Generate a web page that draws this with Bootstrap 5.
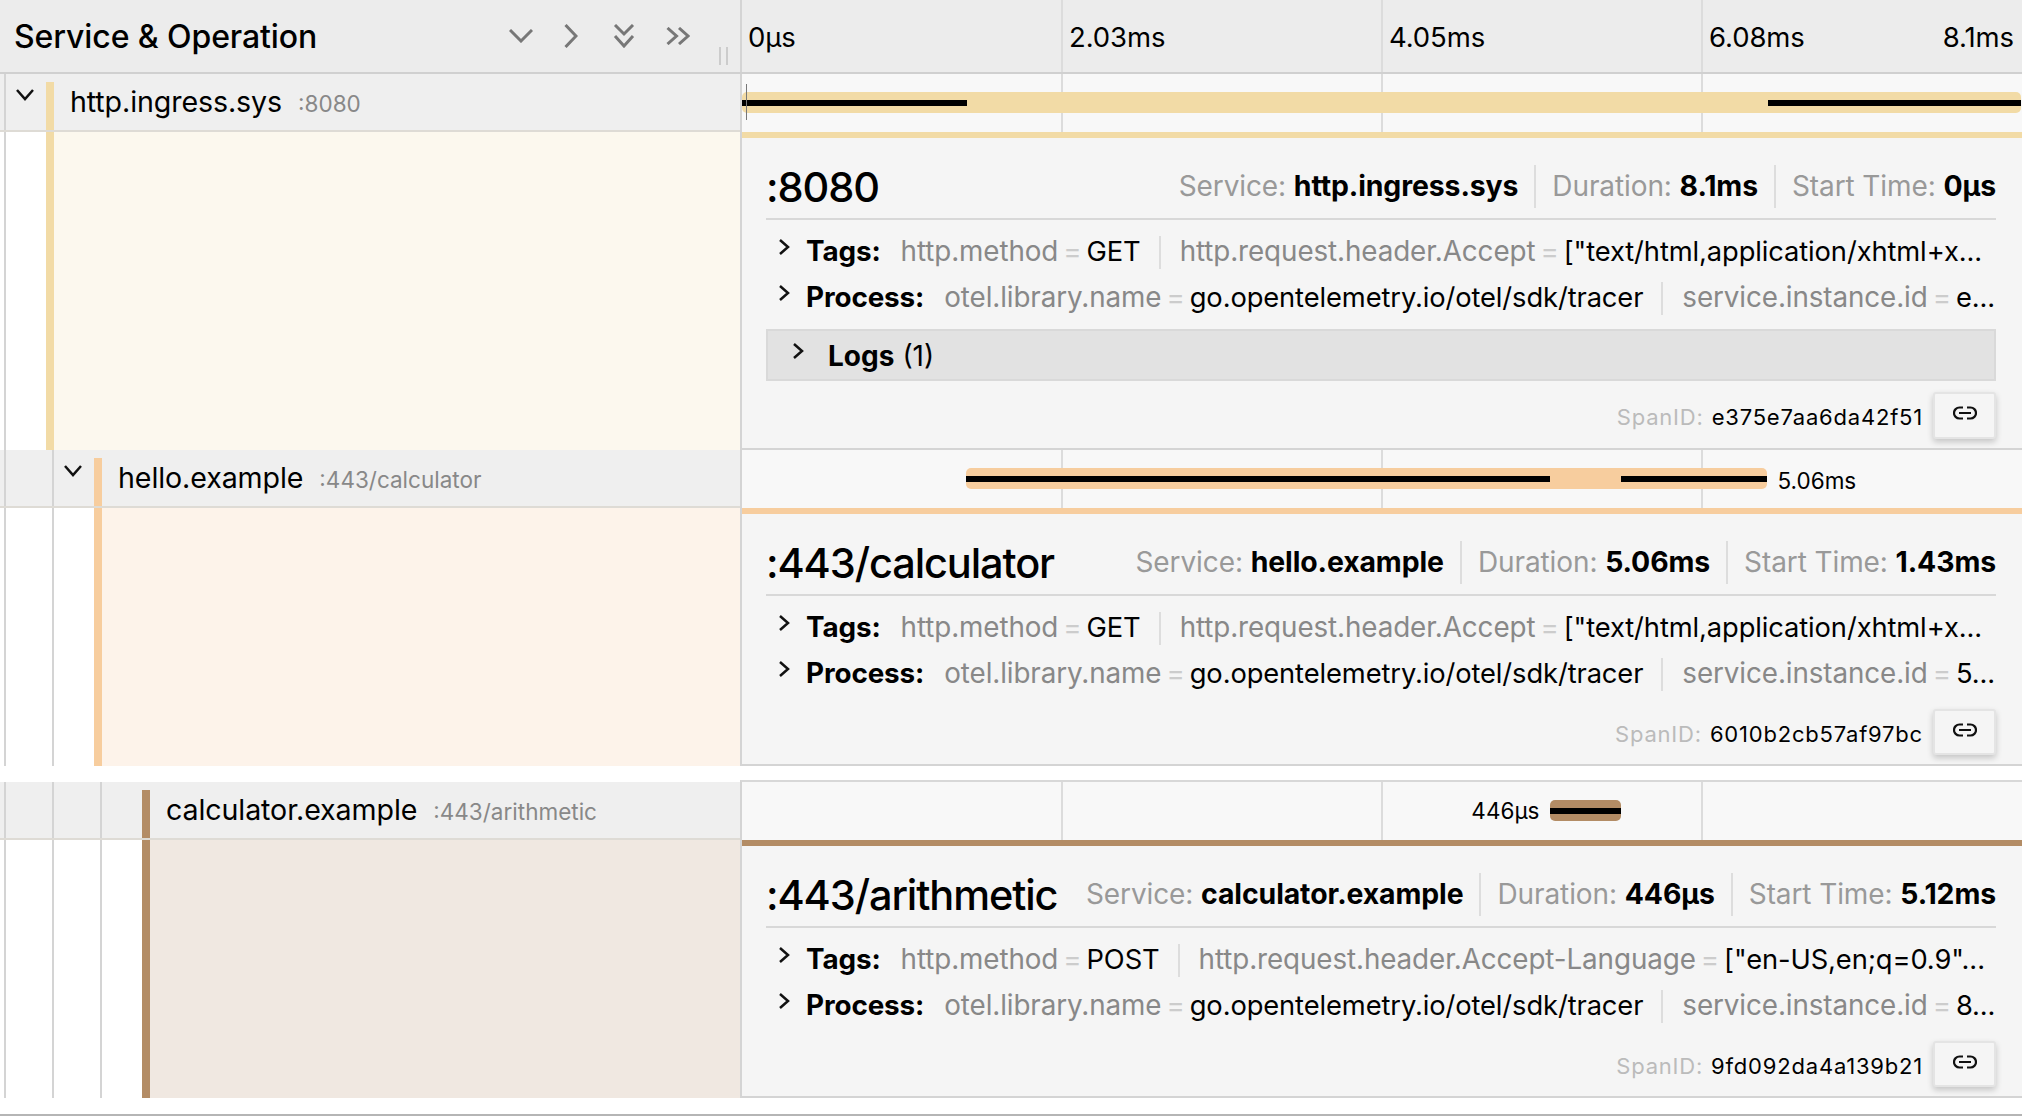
<!DOCTYPE html>
<html lang="en">
  <head>
    <meta charset="UTF-8" />
    <meta name="viewport" content="width=device-width, initial-scale=1.0" />
    <title>Trace timeline</title>
    <link href="https://cdn.jsdelivr.net/npm/bootstrap@5.3.3/dist/css/bootstrap.min.css" rel="stylesheet" />
    <style>
      html, body { background: #fff; overflow: hidden; }
      body { font-family: Inter, "Liberation Sans", sans-serif; color: #000; height: 1116px; }
      .trace-view { height: 1116px; border-bottom: 2px solid #b5b5b5; }
      .name-col { width: 740px; flex: none; }
      .time-col { flex: 1 1 0; min-width: 0; position: relative; border-left: 2px solid #d4d4d4; }

      .trace-head { height: 74px; background: #ececec; border-bottom: 2px solid #d0d0d0; }
      .head-title { font-size: 32px; font-weight: 500; padding: 2px 0 0 14px; letter-spacing: -0.1px; }
      .head-tools { position: relative; padding-right: 50px; gap: 31px; color: #777; }
      .head-tools svg:nth-child(3) { margin-left: 4px; }
      .drag-grip { position: absolute; right: 12px; bottom: 7px; width: 9px; height: 18px; border-left: 2px solid #ccc; border-right: 2px solid #ccc; }
      .tick-label { position: absolute; top: 21px; font-size: 27.5px; line-height: 32px; letter-spacing: -0.1px; }

      .span-row { height: 58px; }
      .span-row.row-topline .time-col { border-top: 2px solid #d8d8d8; }
      .span-row .name-col { background: #efefef; border-bottom: 2px solid #dedbd5; }
      .span-row .time-col { background: #f8f8f8; }
      .indent-guide { width: 48px; flex: none; border-left: 2px solid #d4d4d4; margin-left: 0; }
      .indent-first { margin-left: 4px; }
      .indent-last { width: 42px; }
      .toggle-btn { padding: 14px 0 0 9px; line-height: 0; }
      .color-bar { width: 8px; flex: none; align-self: stretch; }
      .span-row .color-bar { margin-top: 8px; }
      .svc-name { font-size: 28.6px; padding-left: 16px; letter-spacing: -0.1px; }
      .op-name { font-size: 22.5px; color: #888; padding-left: 16px; position: relative; top: 2px; }
      .grid-line { position: absolute; top: 0; bottom: 0; width: 2px; margin-left: -1px; background: #dcdcdc; }
      .span-bar { position: absolute; height: 21px; border-radius: 5px; }
      .run-line { position: absolute; height: 6px; background: #000; top: 8px; }
      .dur-label { position: absolute; font-size: 22.5px; line-height: 26px; }
      .start-mark { position: absolute; left: 4px; top: 10px; width: 1px; height: 36px; background: #777; }

      .detail-fill { flex: 1 1 0; }
      .detail-box { background: #f5f5f5; border-bottom: 2px solid #d4d4d4; padding: 0 26px 9px 24px; border-top-width: 6px; border-top-style: solid; }
      .detail-head { height: 82px; padding-top: 17px; border-bottom: 2px solid #d8d8d8; }
      .op-title { font-size: 41.5px; letter-spacing: -1.1px; margin: 0; font-weight: 500; padding-top: 3px; white-space: nowrap; }
      .meta-list { font-size: 28px; color: #999; white-space: nowrap; letter-spacing: -0.1px; align-items: baseline; }
      .meta-list strong { color: #000; font-weight: 700; font-size: 28.4px; }
      .meta-item + .meta-item { border-left: 2px solid #ddd; margin-left: 16px; padding-left: 16px; }

      .kv-rows { padding-top: 8px; }
      .kv-row { height: 46px; padding-top: 2px; font-size: 27.8px; white-space: nowrap; overflow: hidden; letter-spacing: -0.1px; }
      .kv-row .kv-chevron { width: 40px; flex: none; padding-left: 12px; line-height: 0; position: relative; top: -5px; }
      .kv-title { font-weight: 700; font-size: 27.8px; margin-right: 20px; }
      .kv-key { color: #888; }
      .kv-eq { color: #ccc; margin: 0 5px; }
      .kv-val { color: #000; font-size: 27.3px; }
      .kv-sep { border-left: 2px solid #ddd; height: 33px; margin: 0 19px 0 18px; flex: none; }

      .logs-bar { height: 52px; margin-top: 9px; padding-top: 2px; background: #e2e2e2; border: 2px solid #d9d9d9; font-size: 28px; padding-left: 24px; }
      .logs-bar .kv-chevron { width: 36px; line-height: 0; position: relative; top: -5px; }
      .logs-bar strong { font-weight: 700; margin-right: 8px; }

      .span-foot { height: 46px; margin-top: 13px; }
      .span-foot.after-logs { height: 47px; margin-top: 11px; }
      .span-id { font-size: 22px; letter-spacing: 0.8px; color: #bbb; margin-right: 10px; position: relative; top: 2px; }
      .span-id b { color: #000; font-weight: 400; margin-left: 1px; }
      .link-btn { width: 63px; height: 100%; padding: 0 0 5px; background: #f5f5f5; border: 2px solid #e4e4e4; border-radius: 3px; box-shadow: 0 3px 6px rgba(0,0,0,.2); line-height: 0; }
      .row-gap { height: 14px; }
    </style>
  </head>
  <body>
    <div class="trace-view">
      <div class="trace-head d-flex">
        <div class="name-col d-flex align-items-center justify-content-between position-relative">
          <div class="head-title">Service &amp; Operation</div>
          <div class="head-tools d-flex align-items-center">
            <svg width="24" height="14" viewBox="0 0 24 14" fill="none" stroke="currentColor" stroke-width="3"><path d="M1 1l11 11L23 1"/></svg>
            <svg width="14" height="24" viewBox="0 0 14 24" fill="none" stroke="currentColor" stroke-width="3"><path d="M1.5 1L12 12 1.5 23"/></svg>
            <svg width="22" height="24" viewBox="0 0 22 24" fill="none" stroke="currentColor" stroke-width="3"><path d="M2 1l9 9 9-9M2 12l9 10 9-10"/></svg>
            <svg width="24" height="18" viewBox="0 0 24 18" fill="none" stroke="currentColor" stroke-width="3"><path d="M1.5 1l9 8-9 8M13 1l9 8-9 8"/></svg>
          </div>
          <div class="drag-grip"></div>
        </div>
        <div class="time-col">
          <div class="grid-line" style="left: 25%"></div>
          <div class="grid-line" style="left: 50%"></div>
          <div class="grid-line" style="left: 75%"></div>
          <span class="tick-label" style="left: 6px">0µs</span>
          <span class="tick-label" style="left: calc(25% + 7px)">2.03ms</span>
          <span class="tick-label" style="left: calc(50% + 7px)">4.05ms</span>
          <span class="tick-label" style="left: calc(75% + 7px)">6.08ms</span>
          <span class="tick-label" style="right: 8px">8.1ms</span>
        </div>
      </div>

      <!-- span 1 -->
      <div class="span-row d-flex">
        <div class="name-col d-flex">
          <div class="indent-guide indent-first indent-last toggle-btn">
            <svg width="20" height="14" viewBox="0 0 20 14" fill="none" stroke="#111" stroke-width="2.5"><path d="M2 2l8 9 8-9"/></svg>
          </div>
          <div class="color-bar" style="background: #f2dba6"></div>
          <div class="d-flex align-items-center">
            <span class="svc-name">http.ingress.sys</span><span class="op-name">:8080</span>
          </div>
        </div>
        <div class="time-col">
          <div class="grid-line" style="left: 25%"></div>
          <div class="grid-line" style="left: 50%"></div>
          <div class="grid-line" style="left: 75%"></div>
          <div class="span-bar" style="left: 0; width: 99.95%; top: 18px; background: #f2dba6">
            <div class="run-line" style="left: 0; width: 17.6%"></div>
            <div class="run-line" style="left: 80.2%; right: 0"></div>
          </div>
          <div class="start-mark"></div>
        </div>
      </div>
      <div class="d-flex">
        <div class="name-col d-flex">
          <div class="indent-guide indent-first indent-last"></div>
          <div class="color-bar" style="background: #f2dba6"></div>
          <div class="detail-fill" style="background: #fcf8ee"></div>
        </div>
        <div class="time-col">
          <div class="detail-box" style="border-top-color: #f2dba6">
            <div class="detail-head d-flex align-items-center justify-content-between">
              <h2 class="op-title">:8080</h2>
              <div class="meta-list d-flex">
                <span class="meta-item">Service: <strong>http.ingress.sys</strong></span>
                <span class="meta-item">Duration: <strong>8.1ms</strong></span>
                <span class="meta-item">Start Time: <strong>0µs</strong></span>
              </div>
            </div>
            <div class="kv-rows">
              <div class="kv-row d-flex align-items-center">
                <span class="kv-chevron"><svg width="12" height="18" viewBox="0 0 12 18" fill="none" stroke="#111" stroke-width="2.5"><path d="M2 2l8 7-8 7"/></svg></span>
                <span class="kv-title">Tags:</span>
                <span class="kv-key">http.method</span><span class="kv-eq">=</span><span class="kv-val">GET</span>
                <span class="kv-sep"></span>
                <span class="kv-key">http.request.header.Accept</span><span class="kv-eq">=</span><span class="kv-val">["text/html,application/xhtml+x...</span>
              </div>
              <div class="kv-row d-flex align-items-center">
                <span class="kv-chevron"><svg width="12" height="18" viewBox="0 0 12 18" fill="none" stroke="#111" stroke-width="2.5"><path d="M2 2l8 7-8 7"/></svg></span>
                <span class="kv-title">Process:</span>
                <span class="kv-key">otel.library.name</span><span class="kv-eq">=</span><span class="kv-val">go.opentelemetry.io/otel/sdk/tracer</span>
                <span class="kv-sep"></span>
                <span class="kv-key">service.instance.id</span><span class="kv-eq">=</span><span class="kv-val">e...</span>
              </div>
            </div>
            <div class="logs-bar d-flex align-items-center">
              <span class="kv-chevron"><svg width="12" height="18" viewBox="0 0 12 18" fill="none" stroke="#111" stroke-width="2.5"><path d="M2 2l8 7-8 7"/></svg></span>
              <strong>Logs</strong> (1)
            </div>
            <div class="span-foot after-logs d-flex align-items-center justify-content-end">
              <span class="span-id">SpanID: <b>e375e7aa6da42f51</b></span>
              <button class="link-btn btn" type="button" aria-label="Copy link"><svg width="24" height="14" viewBox="0 0 24 14" fill="none" stroke="#111" stroke-width="2.2"><path d="M10 1.5H6.5a5.5 5.5 0 0 0 0 11H10M14 1.5h3.5a5.5 5.5 0 0 1 0 11H14M6 7h12"/></svg></button>
            </div>
          </div>
        </div>
      </div>

      <!-- span 2 -->
      <div class="span-row d-flex">
        <div class="name-col d-flex">
          <div class="indent-guide indent-first"></div>
          <div class="indent-guide indent-last toggle-btn">
            <svg width="20" height="14" viewBox="0 0 20 14" fill="none" stroke="#111" stroke-width="2.5"><path d="M2 2l8 9 8-9"/></svg>
          </div>
          <div class="color-bar" style="background: #f7cd9e"></div>
          <div class="d-flex align-items-center">
            <span class="svc-name">hello.example</span><span class="op-name">:443/calculator</span>
          </div>
        </div>
        <div class="time-col">
          <div class="grid-line" style="left: 25%"></div>
          <div class="grid-line" style="left: 50%"></div>
          <div class="grid-line" style="left: 75%"></div>
          <div class="span-bar" style="left: 17.5%; width: 62.6%; top: 18px; background: #f7cd9e">
            <div class="run-line" style="left: 0; width: 72.9%"></div>
            <div class="run-line" style="left: 81.8%; right: 0"></div>
          </div>
          <span class="dur-label" style="left: 80.9%; top: 18px">5.06ms</span>
        </div>
      </div>
      <div class="d-flex">
        <div class="name-col d-flex">
          <div class="indent-guide indent-first"></div>
          <div class="indent-guide indent-last"></div>
          <div class="color-bar" style="background: #f7cd9e"></div>
          <div class="detail-fill" style="background: #fdf3ea"></div>
        </div>
        <div class="time-col">
          <div class="detail-box" style="border-top-color: #f7cd9e">
            <div class="detail-head d-flex align-items-center justify-content-between">
              <h2 class="op-title">:443/calculator</h2>
              <div class="meta-list d-flex">
                <span class="meta-item">Service: <strong>hello.example</strong></span>
                <span class="meta-item">Duration: <strong>5.06ms</strong></span>
                <span class="meta-item">Start Time: <strong>1.43ms</strong></span>
              </div>
            </div>
            <div class="kv-rows">
              <div class="kv-row d-flex align-items-center">
                <span class="kv-chevron"><svg width="12" height="18" viewBox="0 0 12 18" fill="none" stroke="#111" stroke-width="2.5"><path d="M2 2l8 7-8 7"/></svg></span>
                <span class="kv-title">Tags:</span>
                <span class="kv-key">http.method</span><span class="kv-eq">=</span><span class="kv-val">GET</span>
                <span class="kv-sep"></span>
                <span class="kv-key">http.request.header.Accept</span><span class="kv-eq">=</span><span class="kv-val">["text/html,application/xhtml+x...</span>
              </div>
              <div class="kv-row d-flex align-items-center">
                <span class="kv-chevron"><svg width="12" height="18" viewBox="0 0 12 18" fill="none" stroke="#111" stroke-width="2.5"><path d="M2 2l8 7-8 7"/></svg></span>
                <span class="kv-title">Process:</span>
                <span class="kv-key">otel.library.name</span><span class="kv-eq">=</span><span class="kv-val">go.opentelemetry.io/otel/sdk/tracer</span>
                <span class="kv-sep"></span>
                <span class="kv-key">service.instance.id</span><span class="kv-eq">=</span><span class="kv-val">5...</span>
              </div>
            </div>
            <div class="span-foot d-flex align-items-center justify-content-end">
              <span class="span-id">SpanID: <b>6010b2cb57af97bc</b></span>
              <button class="link-btn btn" type="button" aria-label="Copy link"><svg width="24" height="14" viewBox="0 0 24 14" fill="none" stroke="#111" stroke-width="2.2"><path d="M10 1.5H6.5a5.5 5.5 0 0 0 0 11H10M14 1.5h3.5a5.5 5.5 0 0 1 0 11H14M6 7h12"/></svg></button>
            </div>
          </div>
        </div>
      </div>

      <div class="row-gap"></div>

      <!-- span 3 -->
      <div class="span-row row-topline d-flex" style="height: 60px">
        <div class="name-col d-flex" style="border-top: 2px solid #fff">
          <div class="indent-guide indent-first"></div>
          <div class="indent-guide"></div>
          <div class="indent-guide indent-last"></div>
          <div class="color-bar" style="background: #b38c65"></div>
          <div class="d-flex align-items-center">
            <span class="svc-name">calculator.example</span><span class="op-name">:443/arithmetic</span>
          </div>
        </div>
        <div class="time-col">
          <div class="grid-line" style="left: 25%"></div>
          <div class="grid-line" style="left: 50%"></div>
          <div class="grid-line" style="left: 75%"></div>
          <div class="span-bar" style="left: 63.1%; width: 5.55%; top: 18px; background: #b38c65">
            <div class="run-line" style="left: 0; right: 0"></div>
          </div>
          <span class="dur-label" style="right: 37.7%; top: 16px">446µs</span>
        </div>
      </div>
      <div class="d-flex">
        <div class="name-col d-flex">
          <div class="indent-guide indent-first"></div>
          <div class="indent-guide"></div>
          <div class="indent-guide indent-last"></div>
          <div class="color-bar" style="background: #b38c65"></div>
          <div class="detail-fill" style="background: #f0e8e1"></div>
        </div>
        <div class="time-col">
          <div class="detail-box" style="border-top-color: #b38c65">
            <div class="detail-head d-flex align-items-center justify-content-between">
              <h2 class="op-title">:443/arithmetic</h2>
              <div class="meta-list d-flex">
                <span class="meta-item">Service: <strong>calculator.example</strong></span>
                <span class="meta-item">Duration: <strong>446µs</strong></span>
                <span class="meta-item">Start Time: <strong>5.12ms</strong></span>
              </div>
            </div>
            <div class="kv-rows">
              <div class="kv-row d-flex align-items-center">
                <span class="kv-chevron"><svg width="12" height="18" viewBox="0 0 12 18" fill="none" stroke="#111" stroke-width="2.5"><path d="M2 2l8 7-8 7"/></svg></span>
                <span class="kv-title">Tags:</span>
                <span class="kv-key">http.method</span><span class="kv-eq">=</span><span class="kv-val">POST</span>
                <span class="kv-sep"></span>
                <span class="kv-key">http.request.header.Accept-Language</span><span class="kv-eq">=</span><span class="kv-val">["en-US,en;q=0.9"...</span>
                <span class="kv-sep"></span>
              </div>
              <div class="kv-row d-flex align-items-center">
                <span class="kv-chevron"><svg width="12" height="18" viewBox="0 0 12 18" fill="none" stroke="#111" stroke-width="2.5"><path d="M2 2l8 7-8 7"/></svg></span>
                <span class="kv-title">Process:</span>
                <span class="kv-key">otel.library.name</span><span class="kv-eq">=</span><span class="kv-val">go.opentelemetry.io/otel/sdk/tracer</span>
                <span class="kv-sep"></span>
                <span class="kv-key">service.instance.id</span><span class="kv-eq">=</span><span class="kv-val">8...</span>
              </div>
            </div>
            <div class="span-foot d-flex align-items-center justify-content-end">
              <span class="span-id">SpanID: <b>9fd092da4a139b21</b></span>
              <button class="link-btn btn" type="button" aria-label="Copy link"><svg width="24" height="14" viewBox="0 0 24 14" fill="none" stroke="#111" stroke-width="2.2"><path d="M10 1.5H6.5a5.5 5.5 0 0 0 0 11H10M14 1.5h3.5a5.5 5.5 0 0 1 0 11H14M6 7h12"/></svg></button>
            </div>
          </div>
        </div>
      </div>
    </div>
    <script src="https://cdn.jsdelivr.net/npm/bootstrap@5.3.3/dist/js/bootstrap.bundle.min.js"></script>
  </body>
</html>
